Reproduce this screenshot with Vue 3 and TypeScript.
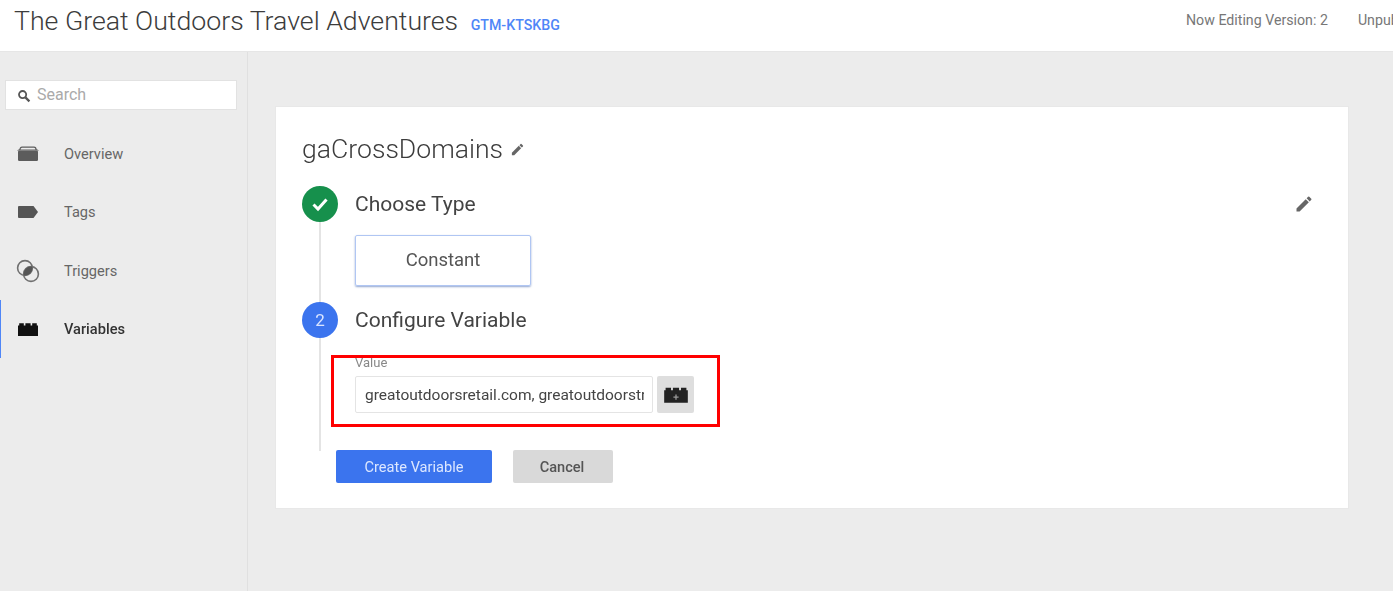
<template>
  <div class="page">
    <header class="topbar">
      <div class="brand">
        <span class="account">The Great Outdoors Travel Adventures</span>
        <a class="container-id">GTM-KTSKBG</a>
      </div>
      <div class="status">
        <span class="version">Now Editing Version: 2</span>
        <span class="published">Unpublished</span>
      </div>
    </header>

    <div class="body">
      <aside class="sidebar">
        <div class="search">
          <svg class="search-icon" viewBox="0 0 14 14" width="14" height="14">
            <circle cx="5.6" cy="5.6" r="3.6" fill="none" stroke="#555" stroke-width="1.8" />
            <path d="M8.4 8.4 12.4 12.4" stroke="#555" stroke-width="2.2" />
          </svg>
          <span>Search</span>
        </div>
        <nav class="nav">
          <div v-for="item in navItems" :key="item.label" class="nav-item" :class="{ active: item.active }">
            <svg viewBox="0 0 22 16" width="22" height="16" class="nav-icon">
              <template v-if="item.icon === 'overview'">
                <path d="M3 3.4C3 2 4 1.2 5 1.2h12c1 0 2 .8 2 2.2L20 4H2z" fill="none" stroke="#5c5c5c" stroke-width="1.2" />
                <rect x="1" y="4.6" width="20" height="10.4" rx="1.2" fill="#5c5c5c" />
              </template>
              <path v-else-if="item.icon === 'tags'" d="M2 2h14.5L21 8l-4.5 6H2a1 1 0 0 1-1-1V3a1 1 0 0 1 1-1z" fill="#555" />
              <template v-else-if="item.icon === 'triggers'">
                <clipPath id="trigger-clip">
                  <circle cx="8" cy="5" r="7.4" />
                </clipPath>
                <circle cx="8" cy="5" r="7.4" fill="none" stroke="#707070" stroke-width="1.6" />
                <circle cx="14" cy="11" r="7.4" fill="none" stroke="#707070" stroke-width="1.6" />
                <circle cx="14" cy="11" r="7.4" fill="#555" clip-path="url(#trigger-clip)" />
              </template>
              <path v-else :d="brickPath" fill="#111" />
            </svg>
            <span>{{ item.label }}</span>
          </div>
        </nav>
      </aside>

      <main class="main">
        <section class="card">
          <h1 class="name">
            gaCrossDomains
            <svg viewBox="0 0 24 24" width="15" height="15">
              <path :d="pencilPath" fill="#666" />
            </svg>
          </h1>

          <div class="steps">
            <div class="step">
              <div class="rail">
                <span class="badge done">
                  <svg viewBox="0 0 24 24" width="24" height="24">
                    <path d="M5.5 12.5 10 17l8.5-9.5" fill="none" stroke="#fff" stroke-width="3" />
                  </svg>
                </span>
                <span class="line"></span>
              </div>
              <div class="step-body first">
                <div class="step-head">
                  <h2>Choose Type</h2>
                  <svg viewBox="0 0 24 24" width="20" height="20">
                    <path :d="pencilPath" fill="#666" />
                  </svg>
                </div>
                <div class="type-box">Constant</div>
              </div>
            </div>

            <div class="step">
              <div class="rail">
                <span class="badge current">2</span>
                <span class="line"></span>
              </div>
              <div class="step-body">
                <h2>Configure Variable</h2>
                <div class="field">
                  <label for="value-input">Value</label>
                  <div class="field-row">
                    <input id="value-input" class="input" readonly value="greatoutdoorsretail.com, greatoutdoorstravel.com" />
                    <button class="picker" type="button">
                      <svg viewBox="0 0 22 16" width="26" height="19">
                        <path :d="brickPath" fill="#222" />
                        <path d="M11 8v4.4M8.8 10.2h4.4" stroke="#999" stroke-width="1.1" />
                      </svg>
                    </button>
                  </div>
                  <div class="highlight"></div>
                </div>
              </div>
            </div>
          </div>

          <div class="actions">
            <button class="btn primary" type="button">Create Variable</button>
            <button class="btn secondary" type="button">Cancel</button>
          </div>
        </section>
      </main>
    </div>
  </div>
</template>

<script setup lang="ts">
type NavIcon = 'overview' | 'tags' | 'triggers' | 'variables';

const navItems: { label: string; icon: NavIcon; active?: boolean }[] = [
  { label: 'Overview', icon: 'overview' },
  { label: 'Tags', icon: 'tags' },
  { label: 'Triggers', icon: 'triggers' },
  { label: 'Variables', icon: 'variables', active: true },
];

const brickPath = 'M1 4.5h1.2V2.2h4.6v2.3h1.6V2.2h5.2v2.3h1.6V2.2h4.6v2.3H21V15H1z';
const pencilPath = 'M3 17.25V21h3.75L17.81 9.94l-3.75-3.75L3 17.25zM20.71 7.04a1 1 0 0 0 0-1.41l-2.34-2.34a1 1 0 0 0-1.41 0l-1.83 1.83 3.75 3.75 1.83-1.83z';
</script>

<style>
html,
body {
  margin: 0;
  overflow: hidden;
  background: #ececec;
}
</style>

<style scoped>
.page {
  width: 1393px;
  height: 591px;
  display: flex;
  flex-direction: column;
  overflow: hidden;
  font-family: Roboto, "Liberation Sans", sans-serif;
  color: #555;
  filter: blur(0.6px);
}

.topbar {
  flex: none;
  height: 51px;
  display: flex;
  justify-content: space-between;
  background: #fff;
  border-bottom: 1px solid #e6e6e6;
  padding-left: 14px;
  white-space: nowrap;
}

.brand {
  display: flex;
  align-items: baseline;
  gap: 12.5px;
  padding-top: 3px;
}

.account {
  font-size: 26.7px;
  line-height: 36px;
  font-weight: 300;
  color: #3c3c3c;
}

.container-id {
  font-size: 14.2px;
  font-weight: 500;
  color: #4f86f7;
}

.status {
  display: flex;
  gap: 30px;
  width: 207px;
  flex: none;
  padding-top: 11px;
  font-size: 14.2px;
  line-height: 18px;
  color: #777;
  overflow: hidden;
}

.body {
  flex: 1;
  display: flex;
  min-height: 0;
}

.sidebar {
  flex: none;
  width: 248px;
  box-sizing: border-box;
  border-right: 1px solid #e0e0e0;
  background: #ececec;
  padding-top: 28px;
}

.search {
  width: 232px;
  height: 30px;
  margin-left: 5px;
  box-sizing: border-box;
  display: flex;
  align-items: center;
  gap: 6px;
  padding: 0 0 1px 11px;
  background: #fff;
  border: 1px solid #e2e2e2;
  font-size: 16px;
  color: #aaa;
}

.search-icon {
  margin-top: 3px;
}

.nav {
  margin-top: 14.6px;
}

.nav-item {
  height: 58.4px;
  display: flex;
  align-items: center;
  gap: 25px;
  padding-left: 17px;
  box-sizing: border-box;
  font-size: 14.6px;
  color: #666;
  border-left: 1px solid transparent;
}

.nav-icon {
  flex: none;
  margin-left: -1px;
  overflow: visible;
}

.nav-item.active {
  border-left-color: #4f86f7;
  color: #333;
  font-weight: 500;
}

.main {
  flex: 1;
  padding: 55px 44px 0 27px;
  margin-top: -1px;
}

.card {
  height: 403px;
  box-sizing: border-box;
  background: #fff;
  border: 1px solid #e8e8e8;
  padding: 25px 26px 0;
}

.name {
  margin: 0;
  display: flex;
  align-items: center;
  gap: 7px;
  font-size: 26.6px;
  line-height: 34px;
  font-weight: 300;
  color: #3c3c3c;
}

.steps {
  margin-top: 20px;
}

.step {
  display: flex;
  gap: 17px;
}

.rail {
  flex: none;
  width: 36px;
  display: flex;
  flex-direction: column;
  align-items: center;
}

.badge {
  flex: none;
  width: 36px;
  height: 36px;
  border-radius: 50%;
  display: flex;
  align-items: center;
  justify-content: center;
  color: #d9e4ff;
  font-size: 17px;
}

.badge.done {
  background: #16904c;
}

.badge.current {
  background: #3b74ee;
}

.line {
  flex: 1;
  width: 2px;
  background: #e4e4e4;
}

.step-body {
  flex: 1;
  min-width: 0;
}

.step-body.first {
  height: 116px;
}

.step-head {
  display: flex;
  justify-content: space-between;
  align-items: center;
  padding-right: 8px;
}

h2 {
  margin: 0;
  font-size: 21px;
  line-height: 36px;
  font-weight: 400;
  color: #444;
}

.type-box {
  width: 176px;
  height: 51px;
  margin-top: 13px;
  box-sizing: border-box;
  display: flex;
  align-items: center;
  justify-content: center;
  padding-bottom: 2px;
  border: 1px solid #b0c6f3;
  box-shadow: 0 1px 2px rgba(70, 105, 175, 0.6);
  border-radius: 2px;
  font-size: 18.5px;
  color: #555;
}

.field {
  position: relative;
  padding-top: 18px;
  padding-bottom: 38px;
}

.field label {
  display: block;
  font-size: 13px;
  line-height: 14px;
  color: #888;
}

.field-row {
  display: flex;
  gap: 4px;
  margin-top: 6px;
}

.input {
  width: 298px;
  height: 37px;
  box-sizing: border-box;
  padding: 0 8px 0 9px;
  border: 1px solid #e4e4e4;
  border-radius: 2px;
  outline: none;
  font-family: inherit;
  font-size: 15.5px;
  color: #444;
}

.picker {
  width: 37px;
  height: 37px;
  padding: 0;
  border: none;
  border-radius: 2px;
  background: #dedede;
  display: flex;
  align-items: center;
  justify-content: center;
}

.highlight {
  position: absolute;
  left: -24px;
  top: 17px;
  width: 389px;
  height: 72px;
  box-sizing: border-box;
  border: 3px solid #f00;
}

.actions {
  display: flex;
  gap: 21px;
  margin-left: 34px;
  margin-top: -1px;
  position: relative;
}

.btn {
  height: 33px;
  border: none;
  border-radius: 2px;
  font-family: inherit;
  font-size: 14.6px;
  padding: 0;
}

.primary {
  width: 156px;
  background: #3b74ee;
  color: #dce7ff;
}

.secondary {
  width: 100px;
  padding-right: 2px;
  background: #d9d9d9;
  color: #555;
  font-weight: 500;
}
</style>
